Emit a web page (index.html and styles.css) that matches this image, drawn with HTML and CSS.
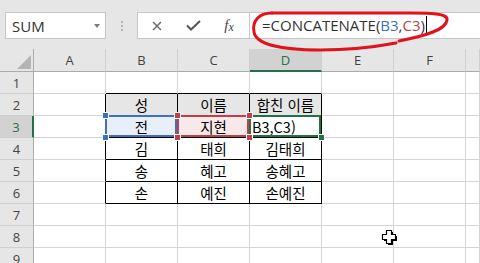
FILE: index.html
```html
<!DOCTYPE html>
<html lang="ko">

<head>
    <meta charset="utf-8">
    <title>CONCATENATE</title>
    <link rel="stylesheet" href="styles.css">
</head>

<body>
    <div class="sheet">
        <div class="bar">
            <div class="namebox"><span>SUM</span><span class="drop"></span></div>
            <div class="grip"><i></i><i></i><i></i></div>
            <div class="btns">
                <span class="btn">
                    <svg width="10" height="10" viewBox="0 0 10 10"><path d="M1 1L9 9M9 1L1 9" stroke="#666" stroke-width="1.4" fill="none"/></svg>
                </span>
                <span class="btn">
                    <svg width="15" height="11" viewBox="0 0 15 11"><path d="M1 5.5L5 9.5L14 1" stroke="#555" stroke-width="2" fill="none"/></svg>
                </span>
                <span class="btn fx"><i>f</i><i class="sub">x</i></span>
            </div>
            <div class="formula">=CONCATENATE(<span class="ref-b">B3</span>,<span class="ref-c">C3</span>)<span class="caret"></span></div>
        </div>

        <div class="grid">
            <div class="hd corner"><span class="tri"></span></div>
            <div class="hd col">A</div>
            <div class="hd col">B</div>
            <div class="hd col">C</div>
            <div class="hd col on">D</div>
            <div class="hd col">E</div>
            <div class="hd col">F</div>
            <div class="hd col"></div>

            <div class="hd row">1</div>
            <div class="c"></div>
            <div class="c tt"></div>
            <div class="c tt"></div>
            <div class="c tt"></div>
            <div class="c"></div>
            <div class="c"></div>
            <div class="c"></div>

            <div class="hd row">2</div>
            <div class="c tl"></div>
            <div class="c t th">성</div>
            <div class="c t th">이름</div>
            <div class="c t th">합친 이름</div>
            <div class="c"></div>
            <div class="c"></div>
            <div class="c"></div>

            <div class="hd row on">3</div>
            <div class="c tl"></div>
            <div class="c t b3">전
                <i class="box blue"></i>
                <i class="dot blue-dot d-tl"></i><i class="dot blue-dot d-bl"></i>
            </div>
            <div class="c t c3">지현
                <i class="box red"></i>
                <i class="dot red-dot d-tl"></i><i class="dot red-dot d-bl"></i>
                <i class="dot red-dot d-tr"></i><i class="dot red-dot d-br"></i>
            </div>
            <div class="c t d3">B3,C3)
                <i class="box green"></i>
                <i class="dot green-dot d-br"></i>
            </div>
            <div class="c"></div>
            <div class="c"></div>
            <div class="c"></div>

            <div class="hd row">4</div>
            <div class="c tl"></div>
            <div class="c t">김</div>
            <div class="c t">태희</div>
            <div class="c t">김태희</div>
            <div class="c"></div>
            <div class="c"></div>
            <div class="c"></div>

            <div class="hd row">5</div>
            <div class="c tl"></div>
            <div class="c t">송</div>
            <div class="c t">혜고</div>
            <div class="c t">송혜고</div>
            <div class="c"></div>
            <div class="c"></div>
            <div class="c"></div>

            <div class="hd row">6</div>
            <div class="c tl"></div>
            <div class="c t">손</div>
            <div class="c t">예진</div>
            <div class="c t">손예진</div>
            <div class="c"></div>
            <div class="c"></div>
            <div class="c"></div>

            <div class="hd row">7</div>
            <div class="c"></div>
            <div class="c"></div>
            <div class="c"></div>
            <div class="c"></div>
            <div class="c"></div>
            <div class="c"></div>
            <div class="c"></div>

            <div class="hd row">8</div>
            <div class="c"></div>
            <div class="c"></div>
            <div class="c"></div>
            <div class="c"></div>
            <div class="c"></div>
            <div class="c"></div>
            <div class="c"></div>

            <div class="hd row">9</div>
            <div class="c"></div>
            <div class="c"></div>
            <div class="c"></div>
            <div class="c"></div>
            <div class="c"></div>
            <div class="c"></div>
            <div class="c"></div>
        </div>

        <!-- hand-drawn mark round the formula -->
        <svg class="ink" width="480" height="60" viewBox="0 0 480 60">
            <path d="M272 13C258 13 252 22 254 32C256 44 280 50 320 50C350 50 380 46 396 43" />
            <path d="M399 41C425 36 446 30 447 20C448 14 435 13 410 13L272 13" />
        </svg>

        <svg class="pointer" width="17" height="17" viewBox="0 0 17 17">
            <path d="M5.5 1.5H10.5V5.5H14.5V10.5H10.5V14.5H5.5V10.5H1.5V5.5H5.5Z" fill="#000" transform="translate(1.5 1.5)"/>
            <path d="M5.5 1.5H10.5V5.5H14.5V10.5H10.5V14.5H5.5V10.5H1.5V5.5H5.5Z" fill="#fff" stroke="#000" stroke-width="1.2"/>
        </svg>
    </div>
</body>

</html>
```

FILE: styles.css
```css
body {
    margin: 0;
    background: #fff;
}

.sheet {
    position: relative;
    width: 480px;
    height: 263px;
    overflow: hidden;
    font-family: "Noto Sans CJK KR", "Noto Sans", sans-serif;
}

/* formula bar */

.bar {
    display: flex;
    align-items: flex-start;
    height: 49px;
    padding-top: 12px;
    box-sizing: border-box;
    background: #e6e6e6;
}

.namebox {
    display: flex;
    align-items: center;
    justify-content: space-between;
    width: 101px;
    height: 27px;
    margin-left: 5px;
    padding: 0 5px 0 6px;
    box-sizing: border-box;
    background: #fff;
    border: 1px solid #c6c6c6;
    font: 15px "Open Sans", sans-serif;
    color: #333;
}

.drop {
    width: 0;
    height: 0;
    border-left: 3.5px solid transparent;
    border-right: 3.5px solid transparent;
    border-top: 4px solid #7a7a7a;
}

.grip {
    display: flex;
    flex-direction: column;
    gap: 2px;
    margin: 9px 0 0 15px;
}

.grip i {
    width: 2px;
    height: 2px;
    background: #b4b4b4;
}

.btns {
    display: flex;
    width: 112px;
    height: 27px;
    margin-left: 14px;
    padding-left: 1px;
    box-sizing: border-box;
    background: #fff;
    border: 1px solid #c6c6c6;
    border-right: 0;
}

.btn {
    display: flex;
    align-items: center;
    justify-content: center;
    width: 36px;
}

.fx {
    font-family: "Liberation Serif", serif;
    font-style: italic;
    color: #444;
}

.fx i {
    font-size: 15px;
}

.fx .sub {
    font-size: 12px;
    margin-top: 3px;
}

.formula {
    flex: 1;
    height: 27px;
    padding-left: 12px;
    box-sizing: border-box;
    background: #fff;
    border: 1px solid #c6c6c6;
    border-right: 0;
    font: 15px/25px "Open Sans", sans-serif;
    color: #333;
    white-space: nowrap;
}

.ref-b {
    color: #3f6fbf;
}

.ref-c {
    color: #bf4048;
}

.caret {
    display: inline-block;
    width: 1px;
    height: 19px;
    margin-left: 1px;
    vertical-align: -4px;
    background: #000;
}

/* grid */

.grid {
    display: grid;
    grid-template-columns: 34px repeat(6, 72px) 1fr;
    grid-template-rows: 23px repeat(9, 22px);
}

.hd {
    display: flex;
    align-items: center;
    justify-content: center;
    box-sizing: border-box;
    background: #e6e6e6;
    color: #444;
    font: 13px "Open Sans", sans-serif;
}

.col {
    border-right: 1px solid #cfcfcf;
    border-bottom: 1px solid #ababab;
}

.row {
    border-right: 1px solid #ababab;
    border-bottom: 1px solid #cfcfcf;
}

.col.on {
    background: #d2d2d2;
    color: #217346;
    border-bottom: 2px solid #217346;
}

.row.on {
    background: #d2d2d2;
    color: #217346;
    border-right: 2px solid #217346;
}

.corner {
    justify-content: flex-end;
    align-items: flex-end;
    padding: 0 2px 2px 0;
    border-right: 1px solid #ababab;
    border-bottom: 1px solid #ababab;
}

.tri {
    width: 0;
    height: 0;
    border-left: 14px solid transparent;
    border-bottom: 14px solid #b4b4b4;
}

.c {
    position: relative;
    display: flex;
    align-items: center;
    justify-content: center;
    box-sizing: border-box;
    border-right: 1px solid #d4d4d4;
    border-bottom: 1px solid #d4d4d4;
    font-size: 14.5px;
    color: #000;
}

.t {
    border-right-color: #000;
    border-bottom-color: #000;
}

.tl {
    border-right-color: #000;
}

.tt {
    border-bottom-color: #000;
}

.th {
    background: #e7e6e6;
}

.b3 {
    background: #e9eff8;
}

.c3 {
    background: #f7e8e9;
}

.d3 {
    justify-content: flex-start;
    padding-left: 2px;
}

/* range finder boxes */

.box {
    position: absolute;
    top: -1px;
    left: -1px;
    right: 0;
    bottom: 0;
    border: 2px solid;
}

.blue {
    border-color: #3f6fbf;
}

.red {
    border-color: #bf4048;
}

.green {
    border-color: #217346;
}

.dot {
    position: absolute;
    z-index: 2;
    width: 7px;
    height: 7px;
    box-sizing: border-box;
    border: 1px solid #fff;
}

.blue-dot {
    background: #3f6fbf;
}

.red-dot {
    background: #bf4048;
}

.green-dot {
    background: #217346;
}

.d-tl {
    left: -4px;
    top: -4px;
}

.d-bl {
    left: -4px;
    top: 18px;
}

.d-tr {
    left: 68px;
    top: -4px;
}

.d-br {
    left: 68px;
    top: 18px;
}

/* overlays */

.ink {
    position: absolute;
    top: 0;
    left: 0;
    pointer-events: none;
}

.ink path {
    fill: none;
    stroke: #e2111b;
    stroke-width: 3;
    stroke-linecap: round;
}

.pointer {
    position: absolute;
    left: 381px;
    top: 229px;
}
```
